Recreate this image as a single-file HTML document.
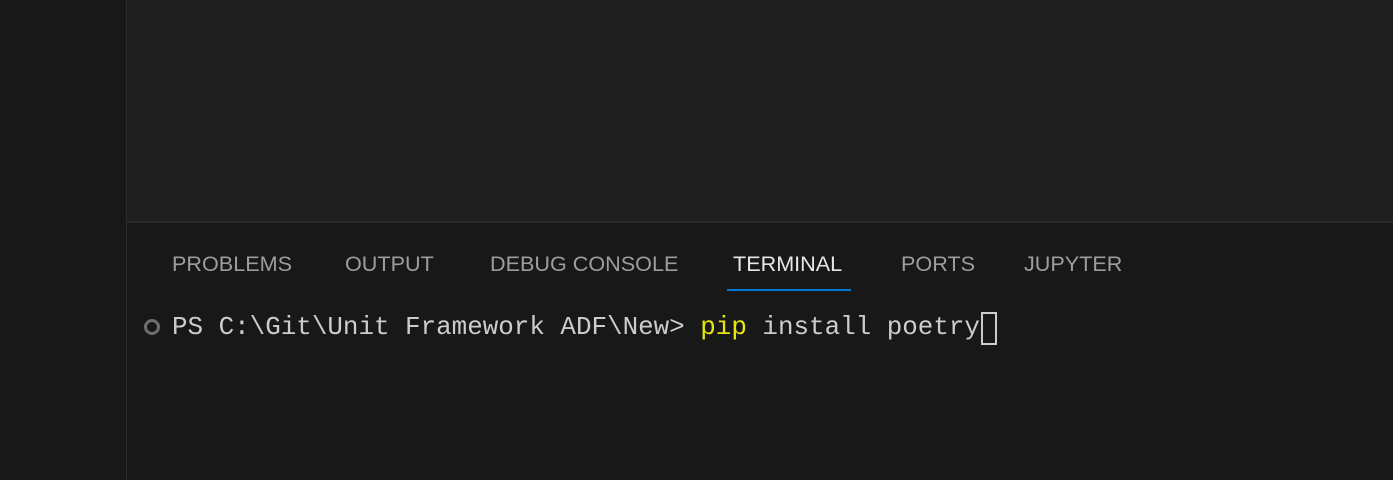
<!DOCTYPE html>
<html><head><style>
body{margin:0;width:1393px;height:480px;background:#181818;overflow:hidden;position:relative;font-family:"Liberation Sans",sans-serif}
.side{position:absolute;left:0;top:0;width:126px;height:480px;background:#181818;border-right:1px solid #2b2b2b}
.editor{position:absolute;left:127px;top:0;right:0;height:221px;background:#1f1f1f;border-bottom:2px solid #2b2b2b}
.tab{position:absolute;top:251px;font-size:21.6px;color:#9d9d9d;line-height:26px;white-space:nowrap}
.ul{position:absolute;left:727px;top:289px;width:124px;height:2px;background:#0078d4}
.term{position:absolute;left:172px;top:310px;font-family:"Liberation Mono",monospace;font-size:25.9px;color:#cccccc;line-height:34px;white-space:pre}
.y{color:#e5e510}
.cur{position:absolute;left:981px;top:312px;width:12px;height:29px;border:2px solid #cccccc}
.dot{position:absolute;left:144px;top:319px;width:10px;height:10px;border:3px solid #6e6e6e;border-radius:50%}
</style></head><body>
<div class="side"></div>
<div class="editor"></div>
<div class="tab" style="left:172px">PROBLEMS</div>
<div class="tab" style="left:345px">OUTPUT</div>
<div class="tab" style="left:490px">DEBUG CONSOLE</div>
<div class="tab" style="left:733px;color:#e7e7e7">TERMINAL</div>
<div class="tab" style="left:901px">PORTS</div>
<div class="tab" style="left:1024px">JUPYTER</div>
<div class="ul"></div>
<div class="dot"></div>
<div class="term">PS C:\Git\Unit Framework ADF\New&gt; <span class="y">pip</span> install poetry</div>
<div class="cur"></div>
</body></html>
